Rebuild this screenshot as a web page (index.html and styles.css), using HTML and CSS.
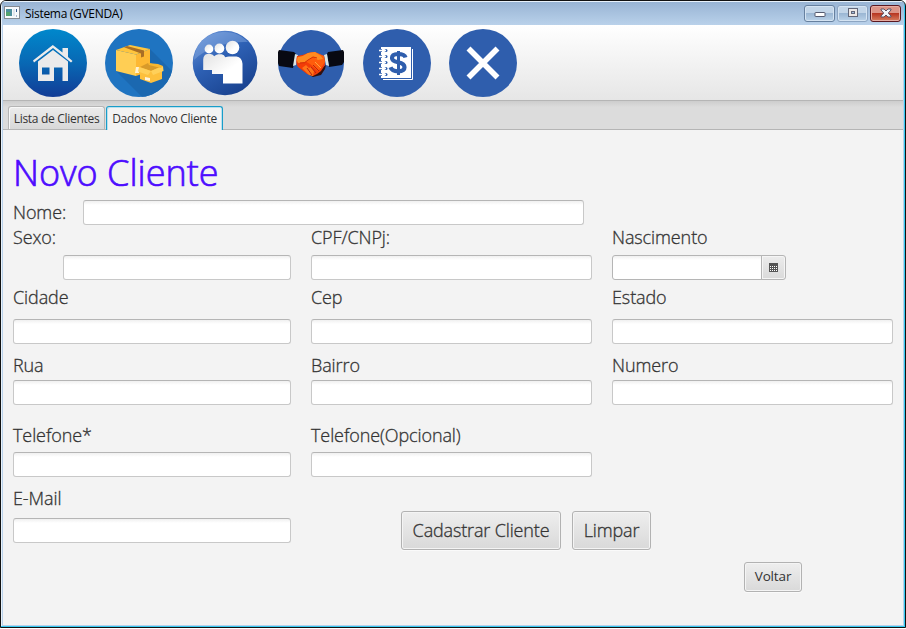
FILE: index.html
```html
<!DOCTYPE html>
<html lang="pt-BR">
<head>
<meta charset="utf-8">
<title>Sistema (GVENDA)</title>
<link rel="stylesheet" href="styles.css">
</head>
<body>
<div class="window">
  <header class="titlebar">
    <svg class="app-icon" width="16" height="14" viewBox="0 0 16 14">
      <rect x=".5" y=".5" width="15" height="12" fill="#f8fafc" stroke="#858b93"/>
      <rect x="2" y="3" width="6" height="7" fill="#4d8f9c"/><rect x="2" y="6" width="4" height="4" fill="#54a270"/>
      <rect x="9" y="3" width="2" height="7" fill="#e0e6ee"/><rect x="12" y="3" width="1" height="3" fill="#345b91"/><rect x="12" y="9" width="1" height="2" fill="#a5b6d0"/>
    </svg>
    <span class="caption">Sistema (GVENDA)</span>
    <div class="controls">
      <button class="ctl" aria-label="Minimizar"><svg width="12" height="12"><rect x="1" y="5.500" width="10" height="4" rx=".5" fill="#fff" stroke="#555b70"/></svg></button>
      <button class="ctl" aria-label="Maximizar"><svg width="12" height="12"><rect x="1.500" y="1.500" width="9" height="8" fill="#ece8e6" stroke="#626779"/><rect x="4.500" y="4.500" width="3" height="2" fill="#9fbcdd" stroke="#626779"/></svg></button>
      <button class="ctl close" aria-label="Fechar"><svg width="12" height="12"><path d="M1 2h3l2 2 2-2h3v1L8.300 6 11 9v1H8L6 8l-2 2H1V9l2.700-3L1 3z" fill="#f2f4f8" stroke="#5b5264"/></svg></button>
    </div>
  </header>

  <nav class="toolbar">
    <svg width="68" height="68" viewBox="0 0 68 68">
      <defs><linearGradient id="home" x2="0" y2="1"><stop offset="0" stop-color="#0088cc"/><stop offset=".5" stop-color="#0868b4"/><stop offset="1" stop-color="#123c96"/></linearGradient></defs>
      <circle cx="34" cy="34" r="34" fill="url(#home)"/>
      <path d="M14 31.500 33.800 16 43.500 23.500V19h5.500v9l4.500 4-1.500 1.500L34 19 15 33.500z" fill="#ebebeb"/>
      <path d="M19 32.500 34 21l15 11.500V52h-5.500V38.500H35V52H19zM23 38.500v7h7.500v-7z" fill="#ebebeb" fill-rule="evenodd"/>
    </svg>
    <svg width="68" height="68" viewBox="0 0 68 68">
      <defs><clipPath id="disc"><circle cx="34" cy="34" r="34"/></clipPath></defs>
      <circle cx="34" cy="34" r="34" fill="#1f74c1"/>
      <path clip-path="url(#disc)" d="M11 42 37 68H68V43L45 20V40z" fill="#1b68b0"/>
      <path d="M11 21 31 25.500V47L11 42z" fill="#ffce54"/><path d="M31 25.500 45 20v22L31 47z" fill="#fdb833"/>
      <path d="M11 21 25 16l20 4-14 5.500z" fill="#ffc53d"/><path d="M19 18.200 22 17l17 4.500v6l-3 1v-4z" fill="#a96e25"/>
      <path d="M31 38h3v6h-4zM35 39h2v5h-2z" fill="#fff2d2"/>
      <path d="M35 38 43 40.500 57 37v13l-11 4-11-4z" fill="#fdc03d"/>
      <path d="M35 38 43 34l14 3-11 5z" fill="#d89a2a"/><path d="M34 38 46 42l-3 4-10-3.500zM46 42l12-5 .5 5L48 46z" fill="#ffd05a"/><path d="m43 34 10 1 5 2-2 2-12-3z" fill="#f9b72f"/>
      <path d="m40 48 5 1v3l-5-1z" fill="#fff4dc"/>
    </svg>
    <svg width="68" height="68" viewBox="0 0 68 68">
      <defs><linearGradient id="ball" x1=".2" x2=".8" y2="1"><stop offset="0" stop-color="#6590d5"/><stop offset=".4" stop-color="#2e61b5"/><stop offset="1" stop-color="#173f8b"/></linearGradient>
      <linearGradient id="white" y2="1"><stop offset="0" stop-color="#e2e2e2"/><stop offset=".6" stop-color="#fff"/></linearGradient></defs>
      <circle cx="34" cy="34" r="32.300" fill="url(#ball)"/>
      <path d="M3 31C4 13 18 3 34 3c10 0 17 4 23 10C36 12 15 19 3 31z" fill="#91b4e6" opacity=".4"/>
      <g fill="url(#white)">
        <circle cx="18" cy="20" r="4.400"/><circle cx="28.400" cy="19.500" r="4.900"/><circle cx="41.500" cy="18.500" r="6.800"/>
        <path d="M12.200 41V30.500q.3-5 4-5.500h3.500q2.300.3 3.500 2.200 1.500-1.700 4-2h3.500q2.600.5 3.600 3 2-.8 3.700-.8h7.500q5.500 1 6 7.300v19.800H32V45H21v-4z"/>
      </g>
    </svg>
    <svg width="68" height="68" viewBox="0 0 68 68">
      <circle cx="34" cy="34" r="33" fill="#2f5ead"/>
      <path d="M2 21l15 2 2 2-3 14-14-2-1-3V23z" fill="#080912"/>
      <path d="m66 21-15 2-1 2 2 13 13-2 2-3V23z" fill="#080912"/>
      <path d="m18 25 3 1-2 10-3 1zM50 25l-3 1 2 10 3 1z" fill="#dce7e5"/>
      <path d="m21 36 3 4 7 5 5 3 8-2 4-6 1-4-3 2-11 8z" fill="#32100e"/>
      <path d="M20 27q7-1 11-3l6-1 10 4q1 6 1 9l-4 6-4 3-4 2-6-2-9-7q-3-4-1-11z" fill="#f23c08"/>
      <path d="M20 28q7 1 11-4l7-1 9 4 1 6-4 6-3 3-8-7-7-4-4 3z" fill="#ff5c0c"/>
      <path d="M21 28q6-1 10-4l7-1 6 4 2 3-5 1-5-3-8 5-7 1q-2-3 0-6z" fill="#ff8b20"/>
      <path d="M23 34q5 1 8-3l5-3 4 1" fill="none" stroke="#d12f08"/>
      <path d="m25 39 4-3 3 3 2-1 3 4-1 5-4-1z" fill="#ff7418"/>
      <path d="m36 36 6 6m-8-4 5 6m-9-5 5 7" fill="none" stroke="#b9240f"/>
      <path d="m38 33 6 6" stroke="#ffa43b"/>
    </svg>
    <svg width="68" height="68" viewBox="0 0 68 68">
      <circle cx="34" cy="34" r="34" fill="#2f5ead"/>
      <path d="M20 50.500H49.500V20" fill="none" stroke="#fff" stroke-width="1"/>
      <path d="M18 18h30v31H18z" fill="#fff"/>
      <g fill="#2f5ead"><circle cx="23" cy="21.500" r="1.500"/><circle cx="23" cy="27.500" r="1.500"/><circle cx="23" cy="33.500" r="1.500"/><circle cx="23" cy="39.500" r="1.500"/><circle cx="23" cy="45.500" r="1.500"/></g>
      <path d="M17 21.500h2m-2 6h2m-2 6h2m-2 6h2m-2 6h2" stroke="#2f5ead" stroke-width="3"/>
      <path d="M16 21.500h7m-7 6h7m-7 6h7m-7 6h7m-7 6h7" stroke="#fff" stroke-width="1.400"/>
      <path d="M42.500 28.500q-1-3.500-7.500-3.500-6 0-6 4 0 3 6 4.300 6.500 1.300 6.500 5 0 4-6.500 4-6 0-7.500-4" fill="none" stroke="#2f5ead" stroke-width="4.200"/>
      <path d="M35.500 22v24" stroke="#2f5ead" stroke-width="3"/>
    </svg>
    <svg width="68" height="68" viewBox="0 0 68 68">
      <circle cx="34" cy="34" r="34" fill="#2f5ead"/>
      <path d="m19.500 19.500 29 29m0-29-29 29" stroke="#fff" stroke-width="5.600"/>
    </svg>
  </nav>

  <div class="tabs">
    <div class="tab"><span>Lista de Clientes</span></div>
    <div class="tab active"><span>Dados Novo Cliente</span></div>
  </div>

  <main class="form">
    <h1>Novo Cliente</h1>
    <div class="name-row"><label for="nome">Nome:</label><input id="nome"></div>
    <div class="fields">
      <div class="field sexo"><label for="sexo">Sexo:</label><input id="sexo"></div>
      <div class="field"><label for="cpf">CPF/CNPj:</label><input id="cpf"></div>
      <div class="field"><label for="nasc">Nascimento</label>
        <div class="date"><input id="nasc"><button aria-label="Calendário"><svg width="9" height="9" shape-rendering="crispEdges"><path d="M0 0h9v9H0z" fill="#555"/><path d="M1 3h1v1H1zm2 0h1v1H3zm2 0h1v1H5zm2 0h1v1H7zM1 5h1v1H1zm2 0h1v1H3zm2 0h1v1H5zm2 0h1v1H7zM1 7h1v1H1zm2 0h1v1H3zm2 0h1v1H5zm2 0h1v1H7z" fill="#fff"/></svg></button></div>
      </div>
    </div>
    <div class="fields city">
      <div class="field"><label for="cidade">Cidade</label><input id="cidade"></div>
      <div class="field"><label for="cep">Cep</label><input id="cep"></div>
      <div class="field"><label for="estado">Estado</label><input id="estado"></div>
    </div>
    <div class="fields street">
      <div class="field"><label for="rua">Rua</label><input id="rua"></div>
      <div class="field"><label for="bairro">Bairro</label><input id="bairro"></div>
      <div class="field"><label for="numero">Numero</label><input id="numero"></div>
    </div>
    <div class="fields phone">
      <div class="field"><label for="tel">Telefone*</label><input id="tel"></div>
      <div class="field"><label for="tel2">Telefone(Opcional)</label><input id="tel2"></div>
    </div>
    <div class="last-row">
      <div class="field"><label for="email">E-Mail</label><input id="email"></div>
      <div class="actions"><button class="btn save"><span>Cadastrar Cliente</span></button><button class="btn clear"><span>Limpar</span></button></div>
    </div>
    <div class="back"><button class="btn small"><span>Voltar</span></button></div>
  </main>
</div>
</body>
</html>
```

FILE: styles.css
```css
* { box-sizing: border-box; }
html { background: #fff; }
body { margin: 0; font-family: "Open Sans", "Noto Sans", sans-serif; color: #333; }
button { padding: 0; font: inherit; color: inherit; }
.window { width: 906px; height: 628px; border: 1px solid #111; border-radius: 6px 6px 0 0; background: #b9d1ea; padding: 0 2px 2px; overflow: hidden; display: flex; flex-direction: column; box-shadow: inset -1px -1px 0 #35c9f0, inset 1px 1px 0 #e8f2fb; }
.titlebar { flex: none; height: 24px; margin: 0 -1px; padding: 0 3px 0 2px; display: flex; align-items: center; background: linear-gradient(#e8f2fb 0 1px, #98b4d4 1px, #b9d1ea); }
.app-icon { display: block; }
.caption { margin-left: 5px; padding-top: 1px; font-size: 12px; line-height: 16px; letter-spacing: -.3px; color: #000; }
.controls { margin-left: auto; display: flex; gap: 2px; }
.ctl { width: 31px; height: 17px; border: 1px solid #66809f; border-radius: 3px; box-shadow: inset 0 0 0 1px #d5e4f3; background: linear-gradient(#c2d5e8 50%, #9bb7d4 50%, #bad2e8); display: flex; align-items: center; justify-content: center; }
.ctl + .ctl { border-color: #8ca5c2; }
.ctl + .ctl.close { border-color: #5a1821; box-shadow: inset 0 0 0 1px #e7aca2; background: linear-gradient(#dc9487 50%, #b83722 50%, #d77e5f); }
.toolbar { flex: none; height: 76px; padding: 4px 16px; display: flex; gap: 18px; background: linear-gradient(#fff, #e6e6e6); border-bottom: 1px solid #b5b5b5; }
.toolbar svg { display: block; }
.tabs { flex: none; height: 29px; padding: 5px 5px 0; display: flex; gap: 1px; background: linear-gradient(#cdcdcd, #dcdcdc 6px); box-shadow: inset 0 -1px #b5b5b5; }
.tab { width: 97px; height: 23px; border: 1px solid #b5b5b5; border-bottom: 0; border-radius: 3px 3px 0 0; background: linear-gradient(#ececec, #d8d8d8); box-shadow: inset 1px 1px #f8f8f8; font-size: 12px; line-height: 24px; letter-spacing: -.3px; text-align: center; white-space: nowrap; }
.tab.active { width: 117px; height: 24px; border-color: #199dc9; background: #f3f3f3; box-shadow: inset 1px 1px #b9e0ee, inset -1px 0 #b9e0ee; }
.form { flex: 1; padding: 0 10px; background: #f3f3f3; }
h1 { margin: 0; height: 70px; padding-top: 17px; font-size: 36px; line-height: 52px; font-weight: 300; color: #4d0cff; -webkit-text-stroke: .7px #4d0cff; }
label { display: block; height: 25px; font-size: 18px; line-height: 25px; font-weight: 300; white-space: nowrap; letter-spacing: -.1px; -webkit-text-stroke: .3px #333; }
input { display: block; width: 100%; height: 25px; margin: 0; padding: 0 8px; border: 1px solid #c8c8c8; border-top-color: #b5b5b5; border-radius: 3px; background: linear-gradient(#f0f0f0, #fff 4px); font: inherit; outline: none; }
.name-row { display: flex; align-items: center; }
.name-row label { width: 70px; }
.name-row input { width: 501px; }
.fields { display: grid; grid-template-columns: 278px 281px 281px; column-gap: 20px; }
.field { display: flex; flex-direction: column; gap: 5px; }
.sexo input { width: 228px; align-self: flex-end; }
.date { width: 174px; display: flex; }
.date input { flex: 1; min-width: 0; border-color: #b5b5b5; border-radius: 3px 0 0 3px; }
.date button { width: 25px; height: 25px; margin-left: -1px; border: 1px solid #b5b5b5; border-radius: 0 3px 3px 0; background: linear-gradient(#ececec, #dadada); box-shadow: inset 0 0 0 1px #f5f5f5; display: flex; align-items: center; justify-content: center; }
.city { margin-top: 5px; }
.city .field { gap: 9px; }
.street { margin-top: 9px; }
.street .field { gap: 2px; }
.phone { margin-top: 18px; }
.phone .field { gap: 4px; }
.last-row { margin-top: 9px; height: 64px; display: flex; gap: 110px; }
.last-row .field { width: 278px; gap: 7px; }
.actions { display: flex; gap: 11px; align-self: flex-end; }
.btn { height: 39px; border: 1px solid #b2b2b2; border-radius: 3px; background: linear-gradient(#eee, #d9d9d9); box-shadow: inset 0 0 0 1px #f4f4f4, 0 1px #fafafa; font-size: 18px; font-weight: 300; letter-spacing: -.15px; white-space: nowrap; -webkit-text-stroke: .3px #333; }
.btn span { display: block; margin-top: -2px; }
.save { width: 160px; }
.clear { width: 79px; }
.back { margin: 12px 91px 0 0; display: flex; justify-content: flex-end; }
.small { width: 58px; height: 30px; font-size: 13.5px; font-weight: 400; -webkit-text-stroke: 0; }
```
